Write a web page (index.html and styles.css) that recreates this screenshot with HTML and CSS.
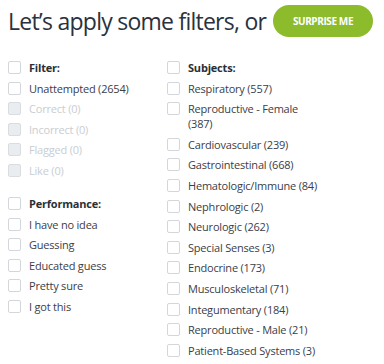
FILE: index.html
```html
<!DOCTYPE html>
<html lang="en">
<head>
  <meta charset="UTF-8" />
  <title>Filters</title>
  <link rel="stylesheet" href="styles.css">
</head>
<body>
  <div class="header">
    <h1>Let’s apply some filters, or</h1>
    <button class="surprise">SURPRISE ME</button>
  </div>

  <div class="filters">
    <div class="col">
      <div class="group">
        <label class="row head"><span class="box"></span>Filter:</label>
        <label class="row"><span class="box"></span>Unattempted (2654)</label>
        <label class="row off"><span class="box"></span>Correct (0)</label>
        <label class="row off"><span class="box"></span>Incorrect (0)</label>
        <label class="row off"><span class="box"></span>Flagged (0)</label>
        <label class="row off"><span class="box"></span>Like (0)</label>
      </div>
      <div class="group">
        <label class="row head"><span class="box"></span>Performance:</label>
        <label class="row"><span class="box"></span>I have no idea</label>
        <label class="row"><span class="box"></span>Guessing</label>
        <label class="row"><span class="box"></span>Educated guess</label>
        <label class="row"><span class="box"></span>Pretty sure</label>
        <label class="row"><span class="box"></span>I got this</label>
      </div>
    </div>

    <div class="col subjects">
      <div class="group">
        <label class="row head"><span class="box"></span>Subjects:</label>
        <label class="row"><span class="box"></span>Respiratory (557)</label>
        <label class="row"><span class="box"></span>Reproductive - Female (387)</label>
        <label class="row"><span class="box"></span>Cardiovascular (239)</label>
        <label class="row"><span class="box"></span>Gastrointestinal (668)</label>
        <label class="row"><span class="box"></span>Hematologic/Immune (84)</label>
        <label class="row"><span class="box"></span>Nephrologic (2)</label>
        <label class="row"><span class="box"></span>Neurologic (262)</label>
        <label class="row"><span class="box"></span>Special Senses (3)</label>
        <label class="row"><span class="box"></span>Endocrine (173)</label>
        <label class="row"><span class="box"></span>Musculoskeletal (71)</label>
        <label class="row"><span class="box"></span>Integumentary (184)</label>
        <label class="row"><span class="box"></span>Reproductive - Male (21)</label>
        <label class="row"><span class="box"></span>Patient-Based Systems (3)</label>
      </div>
    </div>
  </div>
</body>
</html>
```

FILE: styles.css
```css
body {
  margin: 0;
  padding: 5px 8px;
  font-family: 'Open Sans', sans-serif;
  background: #ffffff;
  color: #3b4047;
}

.header {
  display: flex;
  align-items: center;
  justify-content: space-between;
  width: 365px;
  height: 32px;
  margin-bottom: 23px;
}

h1 {
  margin: 0;
  flex: none;
  white-space: nowrap;
  font-size: 23px;
  font-weight: 400;
  letter-spacing: -0.75px;
  color: #29323d;
}

.surprise {
  flex: none;
  width: 100px;
  height: 32px;
  border: none;
  border-radius: 16px;
  background: #8cbb2c;
  color: #ffffff;
  font-family: 'Open Sans', sans-serif;
  font-size: 10px;
  font-weight: 700;
  letter-spacing: -0.4px;
  padding: 0;
}

.filters {
  display: grid;
  grid-template-columns: 159px 153px;
}

.group + .group {
  margin-top: 18px;
}

.row {
  display: flex;
  align-items: flex-start;
  font-size: 11px;
  line-height: 15px;
  letter-spacing: -0.2px;
  margin-bottom: 5.6px;
}

.box {
  flex: none;
  width: 11px;
  height: 11px;
  margin: 1px 8px 0 0;
  border: 1px solid #d3d7db;
  border-radius: 2px;
  background: #ffffff;
}

.head {
  font-weight: 700;
  color: #2a2f36;
}

.off {
  color: #c9cdd1;
}

.off .box {
  background: #e9edf0;
  border-color: #d9dde1;
}
```
